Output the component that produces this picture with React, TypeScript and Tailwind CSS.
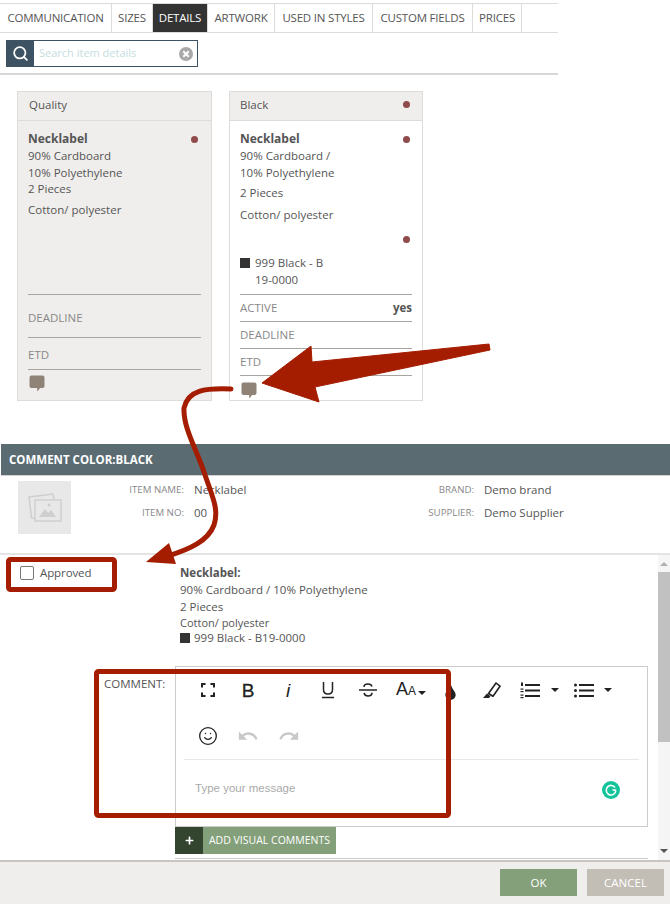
import React from "react";
import { Search, Smile } from "lucide-react";
import { FaTint, FaPlus } from "react-icons/fa";
import { MdUndo, MdRedo } from "react-icons/md";

const Dot = () => <span className="block w-[7px] h-[7px] rounded-full bg-[#8f4a4c]" />;

const Bubble = () => (
  <svg width="16" height="17" viewBox="0 0 16 17">
    <path d="M2.5 0.5h11a2 2 0 0 1 2 2v8.5a2 2 0 0 1-2 2H11l-2.5 3.5L8 13H2.5a2 2 0 0 1-2-2V2.500a2 2 0 0 1 2-2z" fill="#8f8277" />
  </svg>
);

const tabs = [
  ["COMMUNICATION", "w-[112px]"],
  ["SIZES", "w-[41px]"],
  ["DETAILS", "w-[55px]"],
  ["ARTWORK", "w-[67px]"],
  ["USED IN STYLES", "w-[98px]"],
  ["CUSTOM FIELDS", "w-[100px]"],
  ["PRICES", "w-[49px]"],
];

const Line = () => <div className="border-t border-[#a8a5a0]" />;

function Toolbar() {
  return (
    <div className="h-[93px] mx-[8px] border-b border-[#e8e8e8] text-[#222]">
      <div className="h-[46px] flex items-center pl-[4px] font-['Liberation_Sans',sans-serif]">
        <div className="w-[40px] flex justify-center">
          <svg width="14" height="14" viewBox="0 0 14 14" fill="none" stroke="#222" strokeWidth="2">
            <path d="M1 4.500V1h3.500M9.500 1H13v3.500M13 9.500V13H9.500M4.500 13H1V9.500" />
          </svg>
        </div>
        <div className="w-[40px] text-center text-[19px] leading-none [-webkit-text-stroke:0.3px_#222]">B</div>
        <div className="w-[40px] text-center text-[19px] italic leading-none">i</div>
        <div className="w-[40px] flex justify-center">
          <svg width="14" height="17" viewBox="0 0 14 17" fill="none" stroke="#222" strokeWidth="1.500">
            <path d="M2.500 0v7.500c0 3 1.800 4.500 4.500 4.500s4.500-1.500 4.500-4.500V0" />
            <path d="M1 15.500h12" />
          </svg>
        </div>
        <div className="w-[40px] flex justify-center">
          <svg width="18" height="14" viewBox="0 0 18 14" fill="none" stroke="#222" strokeWidth="1.500">
            <path d="M0 7h18" />
            <path d="M13 3.500C12.500 1.800 11 1 9 1 6.500 1 5 2.200 5 4M5 10c.5 2 2 3 4 3 2.500 0 4-1.200 4-3.200" />
          </svg>
        </div>
        <div className="w-[38px] flex items-baseline pl-[8px] text-[18px] leading-none">
          A<span className="text-[12px]">A</span>
          <span className="ml-[2px] mb-[6px] border-x-[4px] border-t-[4px] border-x-transparent border-t-[#222]" />
        </div>
        <div className="w-[45px] flex justify-center pt-[4px] pl-[4px]"><FaTint size={15} /></div>
        <div className="w-[39px] flex justify-center">
          <svg width="20" height="18" viewBox="0 0 20 18" fill="none">
            <path d="M7.500 12.500L15 2l4 3.200-7 10z" stroke="#222" strokeWidth="1.600" strokeLinejoin="round" />
            <path d="M2 17l4-4.500 3.500 2.700-1.500 1.800z" fill="#222" />
          </svg>
        </div>
        <div className="w-[54px] flex items-center pl-[10px]">
          <svg width="20" height="17" viewBox="0 0 20 17" fill="#222">
            <rect x="5" y="2" width="15" height="2" />
            <rect x="5" y="7.500" width="15" height="2" />
            <rect x="5" y="13" width="15" height="2" />
            <rect x="1" y="0.500" width="2" height="3.500" />
            <rect x="0.500" y="6.500" width="3" height="1.200" />
            <rect x="0.500" y="9" width="3" height="1.200" />
            <rect x="0.500" y="12.500" width="3" height="1.200" />
            <rect x="0.500" y="15" width="3" height="1.200" />
          </svg>
          <span className="ml-[11px] border-x-[4px] border-t-[4px] border-x-transparent border-t-[#222]" />
        </div>
        <div className="w-[54px] flex items-center pl-[10px]">
          <svg width="20" height="17" viewBox="0 0 20 17" fill="#222">
            <rect x="5" y="2" width="15" height="2" />
            <rect x="5" y="7.500" width="15" height="2" />
            <rect x="5" y="13" width="15" height="2" />
            <circle cx="1.500" cy="3" r="1.500" />
            <circle cx="1.500" cy="8.500" r="1.500" />
            <circle cx="1.500" cy="14" r="1.500" />
          </svg>
          <span className="ml-[10px] border-x-[4px] border-t-[4px] border-x-transparent border-t-[#222]" />
        </div>
      </div>
      <div className="h-[46px] flex items-center pl-[4px]">
        <div className="w-[40px] flex justify-center"><Smile size={20} strokeWidth={1.6} /></div>
        <div className="w-[40px] flex justify-center text-[#c8c8c8]"><MdUndo size={22} /></div>
        <div className="w-[41px] flex justify-center text-[#c8c8c8]"><MdRedo size={22} /></div>
      </div>
    </div>
  );
}

export default function App() {
  return (
    <div className="relative w-[670px] h-[904px] overflow-hidden bg-white text-[11.500px] text-[#555] font-['Open_Sans',sans-serif]">
      {/* Tabs */}
      <div className="pt-[3px]">
        <div className="w-[558px] h-[30px] flex border-y border-[#dedbd8]">
          {tabs.map(([t, w]) => (
            <div
              key={t}
              className={`${w} flex items-center justify-center border-r border-[#dedbd8] text-[11.500px] tracking-[-0.2px] ${
                t === "DETAILS" ? "bg-[#333333] text-white" : ""
              }`}
            >
              {t}
            </div>
          ))}
        </div>
      </div>

      {/* Search */}
      <div className="w-[558px] h-[42px] pt-[7px] pl-[6px] border-b-2 border-[#d8d8d8]">
        <div className="w-[192px] h-[27px] flex border border-[#3d5364]">
          <div className="w-[27px] bg-[#3d5364] flex items-center justify-center text-white">
            <Search size={17} strokeWidth={2.500} />
          </div>
          <div className="flex-1 flex items-center justify-between pl-[5px] pr-[4px] text-[11px] text-[#c6dde0]">
            <span>Search item details</span>
            <svg width="14" height="14" viewBox="0 0 14 14">
              <circle cx="7" cy="7" r="7" fill="#a9a9a9" />
              <path d="M4.300 4.300l5.400 5.400M9.700 4.300l-5.400 5.400" stroke="#fff" strokeWidth="2" />
            </svg>
          </div>
        </div>
      </div>

      {/* Cards */}
      <div className="flex gap-[17px] pl-[17px] pt-[16px]">
        <div className="w-[195px] h-[310px] flex flex-col bg-[#f0eeec] border border-[#dedbd8]">
          <div className="h-[29px] flex items-center px-[11px] pb-[3px] border-b border-[#dedbd8] shrink-0">Quality</div>
          <div className="flex-1 flex flex-col px-[10px] pt-[10px] leading-[17px]">
            <div className="h-[163px]">
              <div className="flex items-center justify-between pr-[3px] font-bold text-[12px] leading-[16px]"><span>Necklabel</span><Dot /></div>
              <div>90% Cardboard</div>
              <div>10% Polyethylene</div>
              <div className="-mt-[1px]">2 Pieces</div>
              <div className="mt-[4px]">Cotton/ polyester</div>
            </div>
            <Line />
            <div className="h-[42px] flex items-end pb-[11px] text-[#888]">DEADLINE</div>
            <Line />
            <div className="h-[31px] flex items-end pb-[6px] text-[#888]">ETD</div>
            <Line />
            <div className="pt-[5px] pl-[1px]"><Bubble /></div>
          </div>
        </div>

        <div className="w-[194px] h-[310px] flex flex-col border border-[#dedbd8]">
          <div className="h-[29px] flex items-center justify-between pl-[10px] pr-[12px] pb-[3px] bg-[#f0eeec] border-b border-[#dedbd8] shrink-0">
            <span>Black</span><Dot />
          </div>
          <div className="flex-1 flex flex-col px-[10px] pt-[10px] leading-[17px]">
            <div className="h-[163px]">
              <div className="flex items-center justify-between pr-[2px] font-bold text-[12px] leading-[16px]"><span>Necklabel</span><Dot /></div>
              <div>90% Cardboard /</div>
              <div>10% Polyethylene</div>
              <div className="mt-[3px]">2 Pieces</div>
              <div className="mt-[5px]">Cotton/ polyester</div>
              <div className="mt-[13px] flex justify-end pr-[2px]"><Dot /></div>
              <div className="mt-[11px] flex items-center">
                <span className="w-[10px] h-[10px] bg-[#333] mr-[5px]" />999 Black - B
              </div>
              <div className="pl-[15px]">19-0000</div>
            </div>
            <Line />
            <div className="h-[26px] flex items-center justify-between pb-[2px] text-[#888]">
              <span>ACTIVE</span><span className="font-bold text-[#555]">yes</span>
            </div>
            <Line />
            <div className="h-[26px] flex items-center pb-[2px] text-[#888]">DEADLINE</div>
            <Line />
            <div className="h-[26px] flex items-center pb-[2px] text-[#888]">ETD</div>
            <Line />
            <div className="pt-[6px] pl-[1px]"><Bubble /></div>
          </div>
        </div>
      </div>

      {/* Modal */}
      <div className="mt-[43px]">
        <div className="ml-[1px] h-[32px] bg-[#5a6c72] flex items-center pl-[8px] text-white font-bold border-b border-[#cfd3d4]">
          COMMENT COLOR:BLACK
        </div>
        <div className="h-[79px] flex pl-[18px] pt-[5px] border-b-2 border-[#e4e4e4]">
          <div className="w-[53px] h-[53px] bg-[#e8e8e8] flex items-center justify-center shrink-0">
            <svg width="34" height="32" viewBox="0 0 34 32" fill="none" stroke="#cfcfcf" strokeWidth="1.500">
              <path d="M7 26H3.500L1 5l24-3 1 5" />
              <rect x="7" y="8" width="26" height="21" />
              <path d="M11 25l6-8 3 4 3-3 5 7z" fill="#cfcfcf" stroke="none" />
              <circle cx="21" cy="13" r="1.500" fill="#cfcfcf" stroke="none" />
            </svg>
          </div>
          <div className="grid grid-cols-[113px_180px_90px_1fr] gap-x-[10px] gap-y-[6px] auto-rows-[17px] leading-[17px]">
            <div className="text-right text-[9.700px] text-[#888]">ITEM NAME:</div>
            <div>Necklabel</div>
            <div className="text-right text-[9.700px] text-[#888]">BRAND:</div>
            <div>Demo brand</div>
            <div className="text-right text-[9.700px] text-[#888]">ITEM NO:</div>
            <div>00</div>
            <div className="text-right text-[9.700px] text-[#888]">SUPPLIER:</div>
            <div>Demo Supplier</div>
          </div>
        </div>

        <div className="h-[305px] flex overflow-hidden">
          <div className="w-[658px]">
            <div className="flex pt-[10px]">
              <div className="w-[180px] pl-[20px] flex items-start">
                <span className="w-[14px] h-[14px] mt-[1px] rounded-[2px] border border-[#777] bg-white" />
                <span className="ml-[6px] leading-[16px] tracking-[-0.1px]">Approved</span>
              </div>
              <div className="leading-[17px]">
                <div className="font-bold leading-[16px]">Necklabel:</div>
                <div>90% Cardboard / 10% Polyethylene</div>
                <div>2 Pieces</div>
                <div className="text-[11px] leading-[15px]">Cotton/ polyester</div>
                <div className="flex items-center leading-[15px]">
                  <span className="w-[10px] h-[10px] bg-[#333] mr-[4px]" />999 Black - B19-0000
                </div>
              </div>
            </div>
            <div className="flex mt-[21px]">
              <div className="w-[175px] pl-[104px] pt-[9px] leading-[17px] text-[11.500px]">COMMENT:</div>
              <div>
                <div className="relative w-[473px] h-[161px] border border-[#ccc]">
                  <Toolbar />
                  <div className="pl-[19px] pt-[20px] text-[11.500px] text-[#aaa] font-['Liberation_Sans',sans-serif] leading-[17px]">
                    Type your message
                  </div>
                  <svg className="absolute left-[426px] top-[114px]" width="18" height="18" viewBox="0 0 18 18" fill="none">
                    <circle cx="9" cy="9" r="9" fill="#15c39a" />
                    <path d="M13 6.500A4.800 4.800 0 1 0 13.500 11M13.500 11V8.500M13.500 9h-3" stroke="#fff" strokeWidth="1.600" />
                  </svg>
                </div>
                <div className="flex h-[27px] text-white">
                  <div className="w-[28px] bg-[#33442f] flex items-center justify-center"><FaPlus size={9} /></div>
                  <div className="w-[133px] bg-[#84a07a] flex items-center justify-center text-[10.500px]">ADD VISUAL COMMENTS</div>
                </div>
                <div className="mt-[4px] border-t border-[#ccc]" />
              </div>
            </div>
          </div>
          <div className="w-[12px] flex flex-col items-center bg-[#f5f5f5] text-[#777]">
            <div className="h-[17px] flex items-center justify-center shrink-0">
              <span className="border-x-[4px] border-b-[4px] border-x-transparent border-b-[#b0b0b0]" />
            </div>
            <div className="w-full h-[170px] bg-[#c1c1c1]" />
            <div className="flex-1 flex items-end justify-center pb-[7px]">
              <span className="border-x-[4px] border-t-[4px] border-x-transparent border-t-[#555]" />
            </div>
          </div>
        </div>

        <div className="h-[44px] flex justify-end items-start pt-[7px] pr-[6px] gap-[10px] bg-[#f0eeec] border-t-2 border-[#c9c5bf] text-white">
          <div className="w-[77px] h-[27px] flex items-center justify-center bg-[#84a07a]">OK</div>
          <div className="w-[77px] h-[27px] flex items-center justify-center bg-[#c2bdb5]">CANCEL</div>
        </div>
      </div>

      {/* Annotations */}
      <svg className="absolute inset-0 pointer-events-none" width="670" height="904" viewBox="0 0 670 904" fill="none">
        <path d="M262 383L311 346L312 362L489 344L490 350L315 387L319 402Z" fill="#a51d00" stroke="#a51d00" strokeWidth="1" strokeLinejoin="round" />
        <path d="M231 389C205 388 188 390 184 408C183 428 197 450 205 475C213 498 219 510 214 525C208 541 190 549 168 556" stroke="#a51d00" strokeWidth="5" strokeLinecap="round" />
        <path d="M146 562L169 543L176 564Z" fill="#a51d00" />
        <rect x="8.500" y="559.500" width="106" height="30" rx="2" stroke="#a51d00" strokeWidth="5" />
        <rect x="96.500" y="671.500" width="352" height="144" rx="2" stroke="#a51d00" strokeWidth="5" />
      </svg>
    </div>
  );
}
